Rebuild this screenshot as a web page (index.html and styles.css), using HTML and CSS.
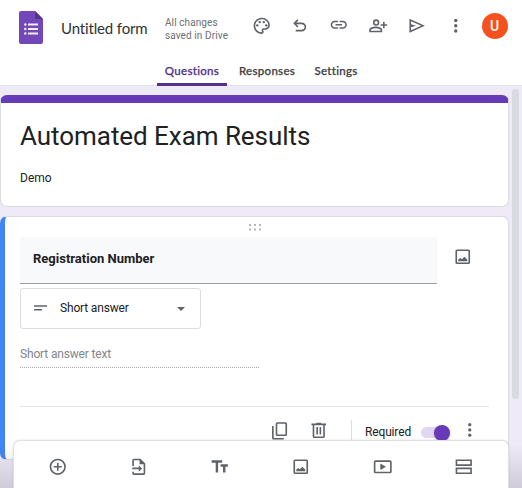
FILE: index.html
```html
<!DOCTYPE html>
<html lang="en">
<head>
<meta charset="utf-8">
<title>Untitled form</title>
<link rel="stylesheet" href="styles.css">
</head>
<body>
<header class="header">
  <div class="topbar">
    <svg class="logo" viewBox="0 0 24 33"><path fill="#7248b9" d="M2 0h14l8 8v23a2 2 0 0 1-2 2H2a2 2 0 0 1-2-2V2a2 2 0 0 1 2-2z"/><path fill="#54318f" d="M16 0l8 8h-6.500a1.500 1.500 0 0 1-1.500-1.500z"/><g fill="#f3edfb"><path d="M9 12.500h10v2H9zM9 17h10v2H9zM9 21.500h10v2H9z"/><circle cx="6.300" cy="13.500" r="1.200"/><circle cx="6.300" cy="18" r="1.200"/><circle cx="6.300" cy="22.500" r="1.200"/></g></svg>
    <div class="form-name">Untitled form</div>
    <div class="saved">All changes<br>saved in Drive</div>
    <div class="actions">
      <div class="slot"><svg class="icon" viewBox="0 0 24 24"><path d="M12 22C6.490 22 2 17.510 2 12S6.490 2 12 2s10 4.040 10 9c0 3.310-2.690 6-6 6h-1.770c-.28 0-.5.22-.5.5 0 .12.050.23.130.33.410.47.640 1.060.640 1.670A2.500 2.500 0 0 1 12 22zm0-18c-4.410 0-8 3.590-8 8s3.590 8 8 8c.28 0 .5-.22.5-.5a.54.54 0 0 0-.14-.35c-.41-.46-.63-1.050-.63-1.650a2.500 2.500 0 0 1 2.500-2.500H16c2.210 0 4-1.790 4-4 0-3.860-3.590-7-8-7z"/><circle cx="6.500" cy="11.500" r="1.500"/><circle cx="9.500" cy="7.500" r="1.500"/><circle cx="14.500" cy="7.500" r="1.500"/><circle cx="17.500" cy="11.500" r="1.500"/></svg></div>
      <div class="slot"><svg class="icon" viewBox="0 0 24 24"><path d="M7 19v-2h7.100q1.575 0 2.738-1Q18 15 18 13.500T16.838 11Q15.675 10 14.100 10H7.800l2.600 2.600L9 14 4 9l5-5 1.400 1.400L7.800 8h6.300q2.425 0 4.163 1.575Q20 11.150 20 13.500t-1.737 3.925Q16.525 19 14.100 19z"/></svg></div>
      <div class="slot"><svg class="icon icon-link" viewBox="0 0 24 24"><path d="M3.900 12c0-1.710 1.390-3.100 3.100-3.100h4V7H7c-2.760 0-5 2.240-5 5s2.240 5 5 5h4v-1.900H7c-1.710 0-3.100-1.390-3.100-3.100zM8 13h8v-2H8v2zm9-6h-4v1.900h4c1.710 0 3.100 1.390 3.100 3.100s-1.390 3.100-3.100 3.100h-4V17h4c2.760 0 5-2.240 5-5s-2.240-5-5-5z"/></svg></div>
      <div class="slot"><svg class="icon" viewBox="0 0 24 24"><path fill-rule="evenodd" d="M10 4a4 4 0 1 0 0 8 4 4 0 0 0 0-8zm0 2a2 2 0 1 1 0 4 2 2 0 0 1 0-4zM9.500 13c-2.670 0-8 1.340-8 4v3h16v-3c0-2.660-5.330-4-8-4zm6 5h-12v-.99C3.700 16.290 6.800 15 9.500 15s5.800 1.290 6 2zM20.500 10V7h-2v3h-3v2h3v3h2v-3h3v-2z"/></svg></div>
      <div class="slot"><svg class="icon" viewBox="0 0 24 24"><path fill-rule="evenodd" d="M3 3.500v17L22 12zM5 6.500L17.500 12 5 17.500v-3.700l6-1.800-6-1.800z"/></svg></div>
      <div class="slot"><svg class="icon" viewBox="0 0 24 24"><circle cx="12" cy="5.500" r="2.100"/><circle cx="12" cy="12" r="2.100"/><circle cx="12" cy="18.500" r="2.100"/></svg></div>
      <div class="slot"><div class="avatar">U</div></div>
    </div>
  </div>
  <nav class="tabs">
    <div class="tab active">Questions</div>
    <div class="tab responses">Responses</div>
    <div class="tab settings">Settings</div>
  </nav>
</header>
<main class="canvas">
  <div class="cards">
    <section class="card intro">
      <h1>Automated Exam Results</h1>
      <p>Demo</p>
    </section>
    <section class="card question">
      <svg class="drag" viewBox="0 0 12 7"><path d="M0 0h2v2H0zM5 0h2v2H5zM10 0h2v2h-2zM0 4.500h2v2H0zM5 4.500h2v2H5zM10 4.500h2v2h-2z"/></svg>
      <div class="question-row">
        <div class="question-title">Registration Number</div>
        <svg class="icon" viewBox="0 0 24 24"><path fill-rule="evenodd" d="M5 3h14a2 2 0 0 1 2 2v14a2 2 0 0 1-2 2H5a2 2 0 0 1-2-2V5a2 2 0 0 1 2-2zm0 2v14h14V5zM6.500 17.500v-2l2.500-2 2 1.500 3-3 3.500 3.500v2z"/></svg>
      </div>
      <div class="select">
        <svg class="short-icon" viewBox="0 0 14 6"><path d="M0 0h14v1.700H0zM0 4h8.500v1.700H0z"/></svg>
        <span>Short answer</span>
        <svg class="caret" viewBox="0 0 8 4"><path d="M0 0h8L4 4z"/></svg>
      </div>
      <div class="answer">Short answer text</div>
      <div class="question-footer">
        <svg class="icon copy" viewBox="0 0 24 24"><path fill-rule="evenodd" d="M9 1.500h10a2 2 0 0 1 2 2v13a2 2 0 0 1-2 2H9a2 2 0 0 1-2-2v-13a2 2 0 0 1 2-2zm0 2v13h10v-13zM2.500 6h2v14.800H17v2H4.500a2 2 0 0 1-2-2z"/></svg>
        <svg class="icon trash" viewBox="0 0 24 24"><path fill-rule="evenodd" d="M9 2h6v1.200h6v2h-1.500V19a2 2 0 0 1-2 2h-11a2 2 0 0 1-2-2V5.200H3v-2h6zM6.500 5.200V19h11V5.200zM9 7.500h2v9H9zM13 7.500h2v9h-2z"/></svg>
        <span class="divider"></span>
        <span class="required">Required</span>
        <span class="switch"><span class="knob"></span></span>
        <svg class="icon" viewBox="0 0 24 24"><circle cx="12" cy="4.500" r="2"/><circle cx="12" cy="11" r="2"/><circle cx="12" cy="17.500" r="2"/></svg>
      </div>
    </section>
  </div>
  <div class="scrollbar"></div>
</main>
<div class="fade"></div>
<div class="toolbar">
  <div class="tool"><svg class="icon" viewBox="0 0 24 24"><path fill-rule="evenodd" d="M12 2a10 10 0 1 0 0 20 10 10 0 0 0 0-20zm0 2a8 8 0 1 1 0 16 8 8 0 0 1 0-16zM11 7h2v4h4v2h-4v4h-2v-4H7v-2h4z"/></svg></div>
  <div class="tool"><svg class="icon" viewBox="0 0 24 24"><path d="M14 2H6a2 2 0 0 0-2 2v7h2V4h7v5h5v11H6v-2H4v2a2 2 0 0 0 2 2h12a2 2 0 0 0 2-2V8zM12 18l4-4-4-4v3H4v2h8z"/></svg></div>
  <div class="tool"><svg class="icon" viewBox="0 0 24 24"><path d="M2 4v3h5v12h3V7h5V4zm20 5h-9v3h3v7h3v-7h3z"/></svg></div>
  <div class="tool"><svg class="icon" viewBox="0 0 24 24"><path fill-rule="evenodd" d="M5 3h14a2 2 0 0 1 2 2v14a2 2 0 0 1-2 2H5a2 2 0 0 1-2-2V5a2 2 0 0 1 2-2zm0 2v14h14V5zM6.500 17.500v-2l2.500-2 2 1.500 3-3 3.500 3.500v2z"/></svg></div>
  <div class="tool"><svg class="icon" viewBox="0 0 24 24"><path fill-rule="evenodd" d="M3 4h18a2 2 0 0 1 2 2v12a2 2 0 0 1-2 2H3a2 2 0 0 1-2-2V6a2 2 0 0 1 2-2zm0 2v12h18V6zM9 8l7 4-7 4z"/></svg></div>
  <div class="tool"><svg class="icon" viewBox="0 0 24 24"><path fill-rule="evenodd" d="M2 3h20v8H2zm2 2v4h16V5zM2 13h20v8H2zm2 2v4h16v-4z"/></svg></div>
</div>
</body>
</html>
```
FILE: styles.css
```css
* { box-sizing: border-box; }

body {
  margin: 0;
  width: 522px;
  height: 488px;
  overflow: hidden;
  position: relative;
  background: #eeeaf7;
  color: #202124;
  font-family: Roboto, "Liberation Sans", sans-serif;
}

svg { display: block; flex: none; }
.icon { width: 19.5px; height: 19.5px; fill: #5f6368; }

.header {
  height: 86px;
  background: #fff;
  border-bottom: 1px solid #e2e1e6;
}
.topbar {
  height: 57px;
  display: flex;
  align-items: flex-start;
  padding-left: 19px;
}
.logo { width: 24px; height: 33px; margin-top: 11px; }
.form-name {
  width: 104px;
  padding-left: 18px;
  margin-top: 17px;
  font: 400 15px/22px Lato, sans-serif;
  letter-spacing: -0.15px;
  color: #303236;
  white-space: nowrap;
}
.saved {
  width: 77px;
  margin: 16px 0 0 18px;
  font-size: 10px;
  line-height: 13px;
  letter-spacing: 0.1px;
  color: #6b6f74;
  white-space: nowrap;
}
.actions { display: flex; height: 52px; }
.slot { width: 38.8px; display: flex; flex: none; align-items: center; justify-content: center; }
.icon-link { margin-bottom: 3px; }
.avatar {
  width: 26px;
  height: 26px;
  margin-left: 1px;
  border-radius: 50%;
  background: #f4511e;
  color: #fff;
  font: 500 14px/26px Roboto, sans-serif;
  text-align: center;
}

.tabs { display: flex; height: 29px; padding-left: 157px; }
.tab {
  font: 500 11.5px/28px "Lato Medium", Lato, sans-serif;
  letter-spacing: 0.3px;
  color: #3c4043;
  -webkit-text-stroke: 0.25px currentColor;
  text-align: center;
  white-space: nowrap;
}
.active {
  width: 70px;
  color: #50308c;
  border-bottom: 3px solid #54318f;
  border-radius: 2px 2px 0 0;
}
.responses { width: 80px; }
.settings { width: 58px; }

.canvas { display: flex; height: 402px; }
.cards { width: 509px; padding-top: 9px; }
.card {
  background: #fff;
  border: 1px solid #dadce0;
  border-radius: 7px;
}
.intro {
  height: 112px;
  border-top: 8px solid #673ab7;
  padding: 15px 19px 0;
}
h1 {
  margin: 0;
  font-size: 26px;
  font-weight: 400;
  line-height: 36px;
  letter-spacing: -0.05px;
  white-space: nowrap;
}
.intro p { margin: 15px 0 0; font-size: 12px; line-height: 18px; }

.question {
  height: 244px;
  margin-top: 9px;
  border-left: 5px solid #4285f4;
  padding: 7px 19px 0 15px;
}
.drag { width: 12px; height: 7px; fill: #b5b7ba; margin: 0 auto 6px 229px; }
.question-row { display: flex; }
.question-title {
  width: 417px;
  height: 47px;
  margin-right: 16px;
  padding-left: 13px;
  background: #f8f9fa;
  border-bottom: 1px solid #9a9da1;
  font-size: 13px;
  font-weight: 700;
  line-height: 44px;
}
.question-row .icon { margin-top: 9.500px; }
.select {
  display: flex;
  align-items: center;
  width: 181px;
  height: 41px;
  margin-top: 4px;
  padding: 0 15px 2px 13px;
  border: 1px solid #dadce0;
  border-radius: 3px;
  font-size: 12px;
  letter-spacing: -0.17px;
}
.short-icon { width: 13px; height: 6px; fill: #5f6368; margin-right: 13px; }
.caret { width: 8px; height: 4px; fill: #5f6368; margin: 2px 0 0 auto; }
.answer {
  width: 239px;
  height: 39px;
  padding-top: 17px;
  border-bottom: 1px dotted #a5a8ab;
  font-size: 12px;
  line-height: 16px;
  letter-spacing: -0.16px;
  color: #80868b;
}
.question-footer {
  display: flex;
  align-items: flex-start;
  width: 469px;
  margin-top: 38px;
  padding: 14px 8px 0 249.5px;
  border-top: 1px solid #e3e5e7;
}
.copy { margin-right: 19.5px; }
.divider { width: 1px; height: 26px; background: #dadce0; margin: -1px 13px 0 23px; }
.required { width: 56px; font-size: 12px; line-height: 22px; letter-spacing: -0.15px; white-space: nowrap; }
.switch {
  width: 29px;
  height: 11px;
  margin: 6px 10px 0 0;
  border-radius: 6px;
  background: #e0d7f1;
  display: flex;
  align-items: center;
  justify-content: flex-end;
}
.knob {
  width: 16px;
  height: 16px;
  flex: none;
  border-radius: 50%;
  background: #673ab7;
  box-shadow: 0 1px 2px rgba(0, 0, 0, 0.3);
}

.scrollbar {
  width: 7px;
  height: 310px;
  margin: 3px 0 0 3px;
  border-radius: 3px;
  background: #dadbe0;
}

.fade {
  position: absolute;
  left: 0;
  right: 0;
  bottom: 0;
  height: 44px;
  background: linear-gradient(rgba(60, 50, 70, 0), rgba(60, 50, 70, 0.17));
}
.toolbar {
  position: absolute;
  left: 13px;
  bottom: 0;
  width: 496px;
  height: 48px;
  padding: 4px 4px 0 3px;
  display: flex;
  background: #fff;
  border: 1px solid #e0e1e4;
  border-bottom: 0;
  border-radius: 7px 7px 0 0;
  box-shadow: 0 0 2px rgba(60, 64, 67, 0.2);
}
.tool { flex: 1; display: flex; align-items: center; justify-content: center; }
```
